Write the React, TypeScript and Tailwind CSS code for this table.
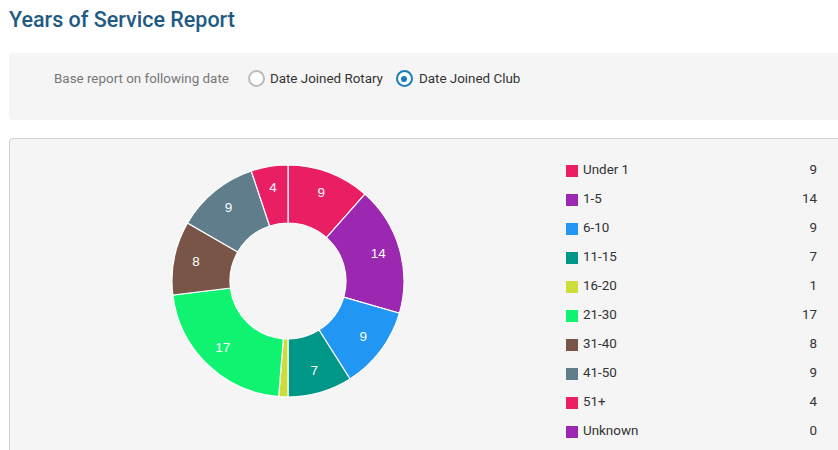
import React from "react";

const data = [
  { label: "Under 1", value: 9, color: "#e91e63" },
  { label: "1-5", value: 14, color: "#9c27b0" },
  { label: "6-10", value: 9, color: "#2196f3" },
  { label: "11-15", value: 7, color: "#009688" },
  { label: "16-20", value: 1, color: "#cddc39" },
  { label: "21-30", value: 17, color: "#10f371" },
  { label: "31-40", value: 8, color: "#795548" },
  { label: "41-50", value: 9, color: "#607d8b" },
  { label: "51+", value: 4, color: "#e91e63" },
  { label: "Unknown", value: 0, color: "#9c27b0" },
];

function pt(cx: number, cy: number, r: number, a: number) {
  const rad = (a * Math.PI) / 180;
  return [cx + r * Math.sin(rad), cy - r * Math.cos(rad)];
}

function Donut() {
  const total = data.reduce((s, d) => s + d.value, 0);
  const cx = 117;
  const cy = 117;
  const R = 116;
  const r = 58;
  let acc = 0;
  const slices = data
    .filter((d) => d.value > 0)
    .map((d) => {
      const a0 = (acc / total) * 360;
      acc += d.value;
      const a1 = (acc / total) * 360;
      const large = a1 - a0 > 180 ? 1 : 0;
      const [x0, y0] = pt(cx, cy, R, a0);
      const [x1, y1] = pt(cx, cy, R, a1);
      const [x2, y2] = pt(cx, cy, r, a1);
      const [x3, y3] = pt(cx, cy, r, a0);
      const path = `M${x0} ${y0} A${R} ${R} 0 ${large} 1 ${x1} ${y1} L${x2} ${y2} A${r} ${r} 0 ${large} 0 ${x3} ${y3} Z`;
      const [lx, ly] = pt(cx, cy, 94, (a0 + a1) / 2);
      return { ...d, path, lx, ly, show: d.value > 1 };
    });
  return (
    <svg width="234" height="234" viewBox="0 0 234 234">
      {slices.map((s, i) => (
        <path key={i} d={s.path} fill={s.color} stroke="#ffffff" strokeWidth="1.2" />
      ))}
      {slices.map((s, i) =>
        s.show ? (
          <text
            key={"t" + i}
            x={s.lx}
            y={s.ly - 1}
            fill="#ffffff"
            fontSize="13.5"
            fontFamily="'Liberation Sans', Arial, sans-serif"
            textAnchor="middle"
            dominantBaseline="central"
          >
            {s.value}
          </text>
        ) : null
      )}
    </svg>
  );
}

export default function App() {
  return (
    <div
      className="w-[838px] h-[450px] overflow-hidden bg-white pl-[9px]"
      style={{ fontFamily: "Roboto, 'Liberation Sans', sans-serif" }}
    >
      <h1 className="pt-[7px] h-[53px] text-[21.5px] leading-[26px] font-medium text-[#1f5a84]">
        Years of Service Report
      </h1>
      <div className="w-[850px] h-[67px] rounded-[4px] bg-[#f5f5f5] pt-[15px] pl-[45px]">
        <div className="flex items-center h-[22px] text-[13.4px]">
          <span className="text-[#777777]">Base report on following date</span>
          <label className="flex items-center ml-[19px]">
            <span className="w-[17px] h-[17px] rounded-full border-2 border-[#bdbdbd] bg-white" />
            <span className="ml-[5px] text-[#333333]">Date Joined Rotary</span>
          </label>
          <label className="flex items-center ml-[13px]">
            <span className="w-[17px] h-[17px] rounded-full border-2 border-[#1a7db6] bg-white flex items-center justify-center">
              <span className="w-[6px] h-[6px] rounded-full bg-[#1a7db6]" />
            </span>
            <span className="ml-[6px] text-[#333333]">Date Joined Club</span>
          </label>
        </div>
      </div>
      <div className="mt-[18px] w-[850px] h-[330px] rounded-[4px] border border-[#d2d2d2] bg-[#f5f5f5] flex">
        <div className="w-[556px] flex justify-center pt-[25px]">
          <Donut />
        </div>
        <div className="w-[251px] pt-[17px]">
          {data.map((d) => (
            <div key={d.label} className="h-[29px] flex items-center text-[13.4px] text-[#333333]">
              <span className="w-[12px] h-[12px]" style={{ backgroundColor: d.color }} />
              <span className="ml-[5px] flex-1">{d.label}</span>
              <span>{d.value}</span>
            </div>
          ))}
        </div>
      </div>
    </div>
  );
}
